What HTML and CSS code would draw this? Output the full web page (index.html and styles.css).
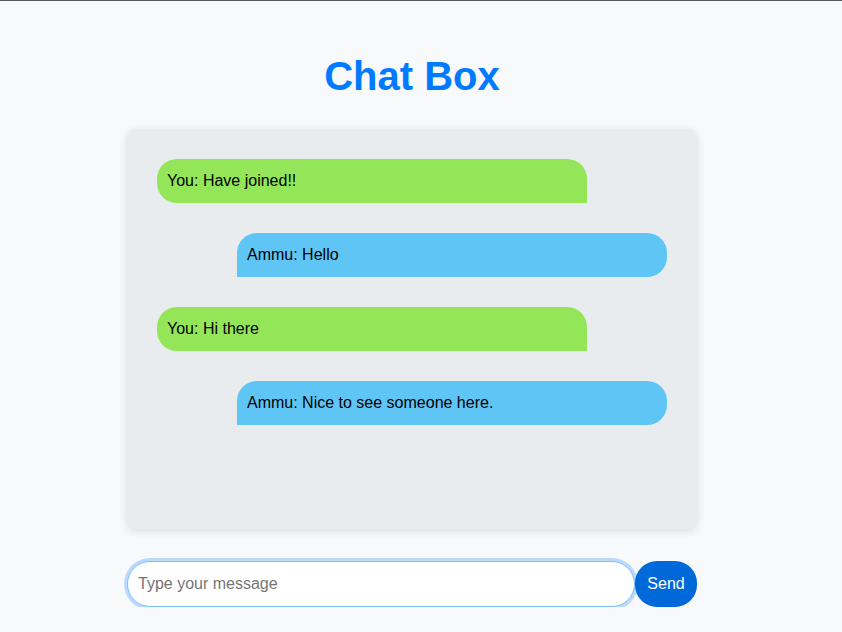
FILE: index.html
```html
<!DOCTYPE html>
<html lang="en">
<head>
<meta charset="utf-8">
<title>Chat Box</title>
<link rel="stylesheet" href="styles.css">
</head>
<body>
<div class="page">
  <h1 class="title">Chat Box</h1>
  <div class="chat">
    <div class="msg msg-you">You: Have joined!!</div>
    <div class="msg msg-other">Ammu: Hello</div>
    <div class="msg msg-you">You: Hi there</div>
    <div class="msg msg-other">Ammu: Nice to see someone here.</div>
  </div>
  <form class="composer" onsubmit="return false;">
    <input class="composer-input" type="text" placeholder="Type your message" autofocus>
    <button class="composer-send" type="submit">Send</button>
  </form>
</div>
</body>
</html>
```
FILE: styles.css
```css
html {
  border-top: 1px solid #5a5a5a;
}
body {
  margin: 0;
  padding-right: 18px;
  background: #f8f9fa;
  font-family: "Liberation Sans", Arial, sans-serif;
}
.page {
  width: 570px;
  margin: 0 auto;
  padding-top: 52px;
}
.title {
  margin: 0 0 30px;
  text-align: center;
  color: #007bff;
  font-size: 40px;
  line-height: 46px;
  font-weight: bold;
}
.chat {
  height: 400px;
  box-sizing: border-box;
  background: #e9ecef;
  border-radius: 8px;
  box-shadow: 0 2px 8px rgba(0, 0, 0, 0.12);
  padding: 30px;
  display: flex;
  flex-direction: column;
  gap: 30px;
}
.msg {
  width: 430px;
  box-sizing: border-box;
  padding: 12px 10px;
  font-size: 16px;
  line-height: 20px;
  color: #000;
}
.msg-you {
  align-self: flex-start;
  background: #94e659;
  border-radius: 20px 20px 0 20px;
}
.msg-other {
  align-self: flex-end;
  background: #5ec5f5;
  border-radius: 20px 20px 20px 0;
}
.composer {
  display: flex;
  margin-top: 32px;
}
.composer-input {
  flex: 1;
  height: 46px;
  box-sizing: border-box;
  padding: 0 10px;
  font-family: "Liberation Sans", Arial, sans-serif;
  font-size: 16px;
  color: #333;
  background: #fff;
  border: 1px solid #80bdff;
  border-radius: 23px;
  box-shadow: 0 0 0 3px rgba(0, 123, 255, 0.25);
  outline: none;
}
.composer-input::placeholder {
  color: #757575;
}
.composer-send {
  width: 62px;
  height: 46px;
  border: none;
  border-radius: 22px;
  background: #0069d9;
  color: #fff;
  font-family: "Liberation Sans", Arial, sans-serif;
  font-size: 16px;
  padding: 0;
}
```
